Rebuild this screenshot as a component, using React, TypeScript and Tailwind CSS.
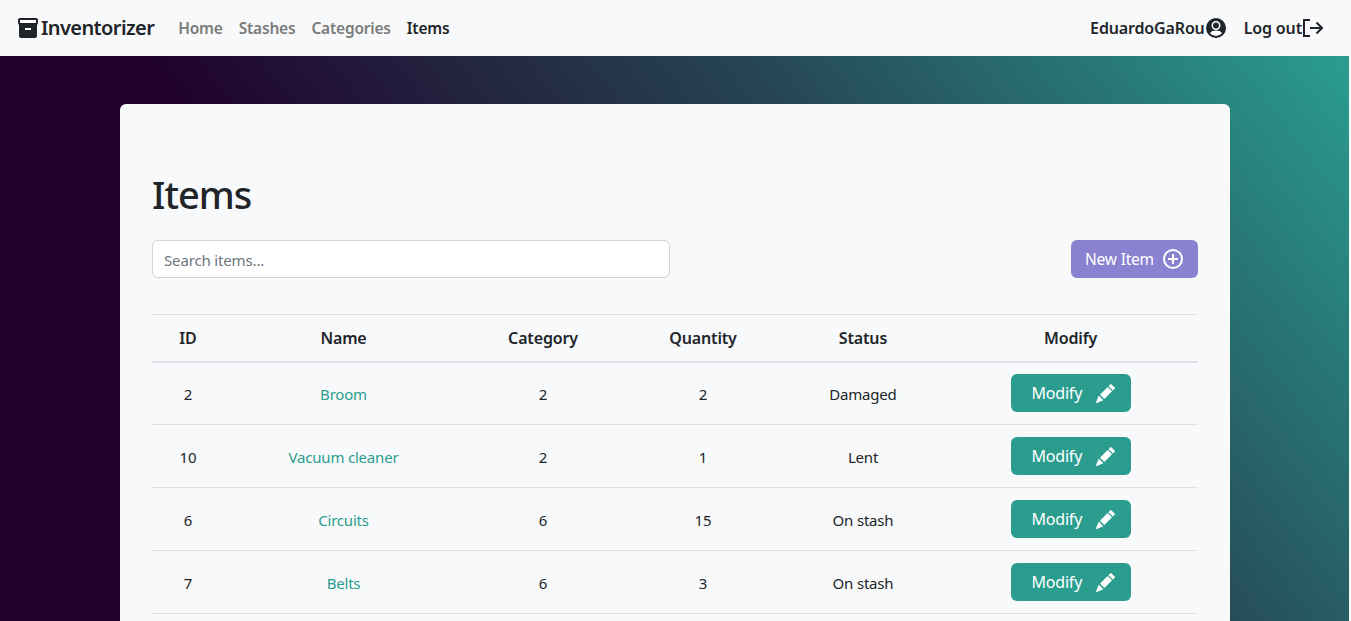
import { BsPencilFill } from "react-icons/bs";

const rows = [
  { id: 2, name: "Broom", category: 2, quantity: 2, status: "Damaged" },
  { id: 10, name: "Vacuum cleaner", category: 2, quantity: 1, status: "Lent" },
  { id: 6, name: "Circuits", category: 6, quantity: 15, status: "On stash" },
  { id: 7, name: "Belts", category: 6, quantity: 3, status: "On stash" },
];

function ArchiveIcon() {
  return (
    <svg viewBox="0 0 20 20" className="h-5 w-5 shrink-0">
      <rect x="1" y="1" width="18" height="5" rx="1" fill="#fff" stroke="#212529" strokeWidth="2" />
      <path d="M1 6h18v12a2 2 0 0 1-2 2H3a2 2 0 0 1-2-2z" fill="#212529" />
      <rect x="7" y="10" width="6" height="2" fill="#fff" />
    </svg>
  );
}

function PersonIcon() {
  return (
    <svg viewBox="0 0 20 20" className="ml-px h-5 w-5 shrink-0">
      <circle cx="10" cy="10" r="10" fill="#212529" />
      <circle cx="10" cy="7.5" r="3.7" fill="#212529" stroke="#fff" strokeWidth="1.5" />
      <path d="M4 15.2c1-2 3.200-2.700 6-2.700s5 .7 6 2.700a8 8 0 0 1-12 0z" fill="#fff" />
    </svg>
  );
}

function LogoutIcon() {
  return (
    <svg viewBox="0 0 21 20" className="h-5 w-[21px] shrink-0" fill="none" stroke="#212529" strokeWidth="2">
      <path d="M8 2H2v16h6" />
      <path d="M8 10h12" />
      <path d="M14.500 4.500 20 10l-5.500 5.500" />
    </svg>
  );
}

function PlusCircleIcon() {
  return (
    <svg viewBox="0 0 20 20" className="h-5 w-5 shrink-0" fill="none" stroke="#fff" strokeWidth="2">
      <circle cx="10" cy="10" r="9" />
      <path d="M10 5v10M5 10h10" />
    </svg>
  );
}

export default function App() {
  return (
    <div className="h-[621px] overflow-hidden bg-[#f8f9fa] pr-[2px] font-['Noto_Sans','Open_Sans',sans-serif] text-[15px] tracking-[-0.2px] text-[#212529]">
      <nav className="flex h-14 items-center bg-[#f8f9fa] pl-[18px] pr-[26px]">
        <a className="flex items-center text-[20px] font-semibold tracking-[-0.6px]">
          <ArchiveIcon />
          <span className="ml-[3px]">Inventorizer</span>
        </a>
        <div className="ml-6 flex gap-4 pt-px text-[15.5px] font-semibold tracking-[-0.2px] text-[#7b7b7b]">
          <a>Home</a>
          <a>Stashes</a>
          <a>Categories</a>
          <a className="text-[#212529]">Items</a>
        </div>
        <div className="ml-auto flex items-center text-base font-semibold tracking-[-0.15px]">
          <a className="flex items-center">
            EduardoGaRou
            <PersonIcon />
          </a>
          <a className="ml-[18px] flex items-center">
            Log out
            <LogoutIcon />
          </a>
        </div>
      </nav>
      <main className="h-[565px] bg-[linear-gradient(52deg,#20002c_32%,#264653_66.5%,#2a9d8f_100%)] pt-12">
        <section className="ml-[120px] w-[1110px] rounded-md bg-[#f8f9fa] px-8 pb-8 pt-[66px]">
          <h1 className="text-[38px] font-medium leading-[48px] tracking-[-1px]">Items</h1>
          <div className="mt-[22px] flex items-center justify-between">
            <input
              placeholder="Search items..."
              className="h-[38px] w-[518px] rounded-md border border-[#ced4da] bg-white px-[11px] pt-px text-[15px] tracking-[-0.15px] placeholder:text-[#6c757d]"
            />
            <button className="flex h-[38px] w-[127px] items-center justify-start gap-[9px] rounded-md bg-[#8a82d0] pl-3.5 text-[15.5px] text-white">
              <span className="pt-px">New Item</span>
              <PlusCircleIcon />
            </button>
          </div>
          <table className="mt-9 w-[1046px] table-fixed border-collapse text-center">
            <thead>
              <tr className="h-[47px] border-y border-b-2 border-[#dee2e6] text-base tracking-[-0.15px]">
                <th className="w-[72px] font-semibold">ID</th>
                <th className="w-[239px] font-semibold">Name</th>
                <th className="w-[160px] font-semibold">Category</th>
                <th className="w-[160px] font-semibold">Quantity</th>
                <th className="w-[160px] font-semibold">Status</th>
                <th className="w-[255px] font-semibold">Modify</th>
              </tr>
            </thead>
            <tbody>
              {rows.map((r) => (
                <tr key={r.id} className="h-[63px] border-b border-[#dee2e6]">
                  <td className="pt-0.5">{r.id}</td>
                  <td className="pt-0.5">
                    <a className="text-[#2a9d8f]">{r.name}</a>
                  </td>
                  <td className="pt-0.5">{r.category}</td>
                  <td className="pt-0.5">{r.quantity}</td>
                  <td className="pt-0.5">{r.status}</td>
                  <td>
                    <button className="mx-auto flex h-[38px] w-[120px] items-center justify-start gap-[14px] rounded-md bg-[#2a9d8f] pl-[21px] text-base text-white">
                      Modify
                      <BsPencilFill className="h-[19px] w-[19px]" />
                    </button>
                  </td>
                </tr>
              ))}
            </tbody>
          </table>
        </section>
      </main>
    </div>
  );
}
